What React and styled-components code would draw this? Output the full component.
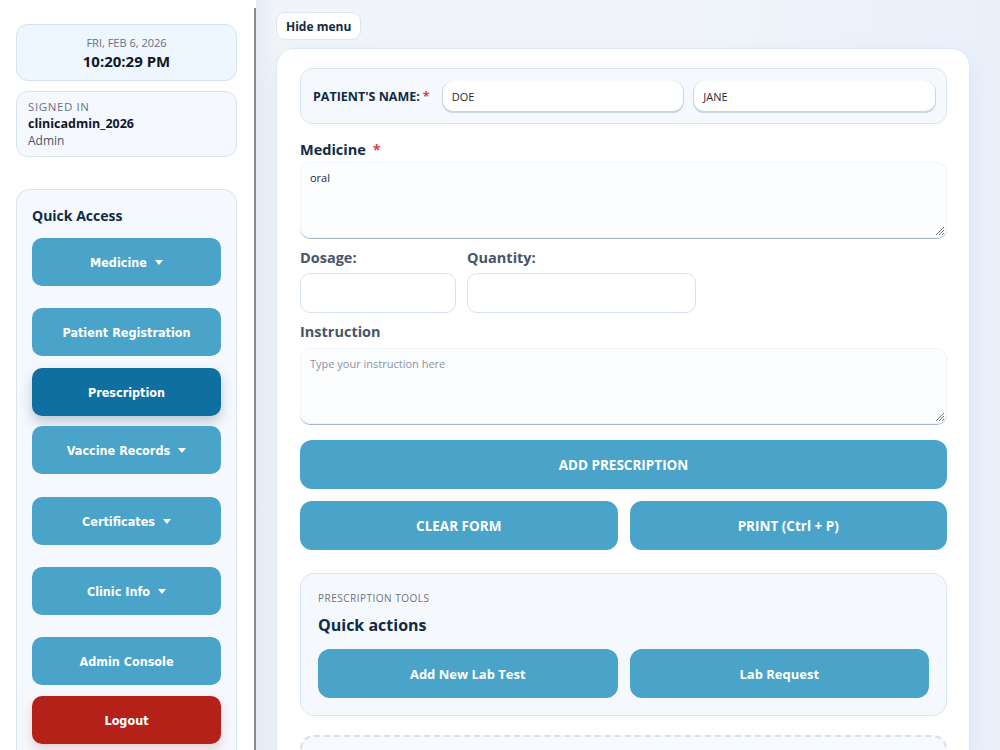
import { styled, createGlobalStyle } from "styled-components";

const GlobalStyle = createGlobalStyle`
    html, body {
        margin: 0;
        padding: 0;
        background: #ffffff;
        font-family: "Open Sans", "Noto Sans", sans-serif;
        color: #0f2a44;
    }
    * {
        box-sizing: border-box;
    }
`;

const Page = styled.div`
    display: flex;
    width: 1000px;
    height: 750px;
    overflow: hidden;
`;

const Sidebar = styled.aside`
    width: 254px;
    flex-shrink: 0;
    padding: 24px 17px 0 16px;
    display: flex;
    flex-direction: column;
    background: #ffffff;
`;

const Divider = styled.div`
    width: 2px;
    margin-top: 8px;
    background: #8c8c8c;
    flex-shrink: 0;
`;

const InfoBox = styled.div`
    border-radius: 12px;
    border: 1px solid #d5e3f0;
    background: ${(p) => p.$bg};
    padding: ${(p) => p.$pad};
    display: flex;
    flex-direction: column;
    align-items: ${(p) => (p.$center ? "center" : "flex-start")};
    margin-bottom: ${(p) => p.$mb || 0}px;
`;

const DateText = styled.div`
    font-size: 11px;
    color: #6b7280;
    line-height: 16px;
`;

const TimeText = styled.div`
    font-size: 15px;
    font-weight: 700;
    color: #111827;
    line-height: 20px;
`;

const SmallCaps = styled.div`
    font-size: 11.5px;
    letter-spacing: 0.6px;
    color: #6b7280;
    line-height: 16px;
`;

const UserName = styled.div`
    font-size: 12.5px;
    font-weight: 700;
    color: #111827;
    line-height: 18px;
`;

const Role = styled.div`
    font-size: 12px;
    color: #4b5563;
    line-height: 16px;
`;

const QuickPanel = styled.div`
    border: 1px solid #d8e5f1;
    border-bottom: none;
    border-radius: 14px 14px 0 0;
    background: #f5f9fd;
    padding: 16px 15px 20px 15px;
    display: flex;
    flex-direction: column;
    flex: 1;
`;

const PanelTitle = styled.div`
    font-size: 14px;
    font-weight: 700;
    color: #0f2a44;
    line-height: 20px;
    margin-bottom: 12px;
`;

const NavButton = styled.button`
    width: 189px;
    height: 48px;
    border: none;
    border-radius: 10px;
    background: ${(p) => (p.$variant === "active" ? "#0f6fa0" : p.$variant === "danger" ? "#b32119" : "#4aa3c9")};
    box-shadow: ${(p) =>
        p.$variant === "active"
            ? "0 6px 12px rgba(15, 60, 100, 0.25)"
            : p.$variant === "danger"
            ? "0 6px 12px rgba(180, 40, 30, 0.18)"
            : "none"};
    color: #ffffff;
    font-family: "DejaVu Sans", Verdana, sans-serif;
    font-stretch: condensed;
    font-size: 12.5px;
    font-weight: 700;
    display: flex;
    align-items: center;
    justify-content: center;
    gap: 8px;
    margin-bottom: ${(p) => p.$mb}px;
    flex-shrink: 0;
    cursor: pointer;
`;

const Caret = styled.span`
    width: 0;
    height: 0;
    border-left: 4px solid transparent;
    border-right: 4px solid transparent;
    border-top: 5px solid #ffffff;
`;

const Main = styled.main`
    flex: 1;
    min-width: 0;
    padding: 12px 29px 0 20px;
    background: linear-gradient(90deg, #e4ecf6 0px, #f1f5fa 20px, #f0f4fa 60%, #e9f0fa 100%);
    display: flex;
    flex-direction: column;
    align-items: flex-start;
    overflow: hidden;
`;

const HideButton = styled.button`
    height: 28px;
    flex-shrink: 0;
    padding: 0 9px;
    border: 1px solid #dbe6f2;
    border-radius: 9px;
    background: #ffffff;
    font-family: "Open Sans", sans-serif;
    font-size: 12px;
    font-weight: 700;
    color: #0f2a44;
    margin-bottom: 8px;
    cursor: pointer;
`;

const Card = styled.section`
    width: 694px;
    flex-shrink: 0;
    background: #ffffff;
    border: 1px solid #dde8f4;
    border-radius: 18px;
    box-shadow: 0 8px 24px rgba(30, 70, 120, 0.06);
    padding: 19px 22px 40px 23px;
    display: flex;
    flex-direction: column;
`;

const NameRow = styled.div`
    height: 56px;
    display: flex;
    align-items: center;
    gap: 11px;
    padding: 0 11px 0 12px;
    border: 1px solid #d9e6f2;
    border-radius: 12px;
    background: #f5f9fd;
    margin-bottom: 16px;
`;

const NameLabel = styled.div`
    font-size: 12.5px;
    font-weight: 700;
    color: #0f2a44;
    white-space: nowrap;
    margin-right: 2px;
`;

const Star = styled.span`
    color: #e0413a;
    margin-left: ${(p) => p.$gap || 3}px;
`;

const NameInput = styled.div`
    flex: 1;
    height: 30px;
    background: #ffffff;
    border-radius: 10px;
    box-shadow: 0 1px 0 1px #c9d6e3;
    font-size: 11px;
    color: #1f2937;
    display: flex;
    align-items: center;
    padding-left: 9px;
`;

const FieldLabel = styled.div`
    font-size: 14.5px;
    font-weight: 700;
    color: ${(p) => (p.$dark ? "#0f2a44" : "#475569")};
    line-height: 20px;
    margin-bottom: ${(p) => p.$mb || 4}px;
`;

const TextArea = styled.div`
    position: relative;
    height: 76px;
    flex-shrink: 0;
    background: #fcfdfe;
    border-radius: 10px;
    box-shadow: 0 1px 0 0 #a7b7c8, inset 0 0 0 1px #f1f5f9;
    font-size: 11px;
    color: ${(p) => (p.$placeholder ? "#8a94a3" : "#1f2937")};
    padding: 8px 10px;
    margin-bottom: ${(p) => p.$mb}px;
`;

const Grip = styled.svg`
    position: absolute;
    right: 2px;
    bottom: 2px;
`;

const SmallRow = styled.div`
    display: flex;
    gap: 11px;
    margin-bottom: 9px;
`;

const SmallField = styled.div`
    display: flex;
    flex-direction: column;
    width: ${(p) => p.$w}px;
`;

const SmallInput = styled.div`
    height: 40px;
    border: 1px solid #d6e2ee;
    border-radius: 10px;
    background: #ffffff;
`;

const ActionButton = styled.button`
    height: 49px;
    flex: 1;
    width: 100%;
    border: none;
    border-radius: 12px;
    background: #4aa3c9;
    color: #ffffff;
    font-family: "Open Sans", sans-serif;
    font-size: ${(p) => p.$size || 13.5}px;
    font-weight: 700;
    cursor: pointer;
`;

const ButtonRow = styled.div`
    display: flex;
    gap: 12px;
    margin-top: ${(p) => p.$mt}px;
    margin-bottom: ${(p) => p.$mb || 0}px;
`;

const ToolsBox = styled.div`
    border: 1px solid #d9e6f2;
    border-radius: 14px;
    background: #f5f9fd;
    padding: 17px;
    display: flex;
    flex-direction: column;
`;

const ToolsEyebrow = styled.div`
    font-size: 10px;
    letter-spacing: 0.5px;
    color: #6b7280;
    line-height: 14px;
    margin-bottom: 10px;
`;

const ToolsTitle = styled.div`
    font-size: 16px;
    font-weight: 700;
    color: #0f2a44;
    line-height: 20px;
    margin-bottom: 14px;
`;

const DashedBox = styled.div`
    margin-top: 19px;
    height: 60px;
    border: 2px dashed #d3e2f0;
    border-radius: 14px;
    background: #f7fafe;
`;

const GripIcon = () => (
    <Grip width="12" height="12" viewBox="0 0 12 12">
        <path d="M11 3 L3 11 M11 6 L6 11 M11 9 L9 11" stroke="#6b7280" strokeWidth="1" fill="none" />
    </Grip>
);

const navItems = [
    { label: "Medicine", caret: true, mb: 22 },
    { label: "Patient Registration", mb: 12 },
    { label: "Prescription", variant: "active", mb: 10 },
    { label: "Vaccine Records", caret: true, mb: 23 },
    { label: "Certificates", caret: true, mb: 22 },
    { label: "Clinic Info", caret: true, mb: 22 },
    { label: "Admin Console", mb: 11 },
    { label: "Logout", variant: "danger", mb: 0 },
];

const App = () => {
    return (
        <>
            <GlobalStyle />
            <Page>
                <Sidebar>
                    <InfoBox $bg="#eef6ff" $pad="10px 0 9px" $center $mb={10}>
                        <DateText>FRI, FEB 6, 2026</DateText>
                        <TimeText>10:20:29 PM</TimeText>
                    </InfoBox>
                    <InfoBox $bg="#f5f9ff" $pad="7px 11px 7px" $mb={32}>
                        <SmallCaps>SIGNED IN</SmallCaps>
                        <UserName>clinicadmin_2026</UserName>
                        <Role>Admin</Role>
                    </InfoBox>
                    <QuickPanel>
                        <PanelTitle>Quick Access</PanelTitle>
                        {navItems.map((item) => (
                            <NavButton key={item.label} $variant={item.variant} $mb={item.mb}>
                                {item.label}
                                {item.caret && <Caret />}
                            </NavButton>
                        ))}
                    </QuickPanel>
                </Sidebar>
                <Divider />
                <Main>
                    <HideButton>Hide menu</HideButton>
                    <Card>
                        <NameRow>
                            <NameLabel>
                                PATIENT'S NAME:<Star>*</Star>
                            </NameLabel>
                            <NameInput>DOE</NameInput>
                            <NameInput>JANE</NameInput>
                        </NameRow>

                        <FieldLabel $dark $mb={2}>
                            Medicine<Star $gap={7}>*</Star>
                        </FieldLabel>
                        <TextArea $mb={10}>
                            oral
                            <GripIcon />
                        </TextArea>

                        <SmallRow>
                            <SmallField $w={156}>
                                <FieldLabel $mb={5}>Dosage:</FieldLabel>
                                <SmallInput />
                            </SmallField>
                            <SmallField $w={229}>
                                <FieldLabel $mb={5}>Quantity:</FieldLabel>
                                <SmallInput />
                            </SmallField>
                        </SmallRow>

                        <FieldLabel $mb={6}>Instruction</FieldLabel>
                        <TextArea $placeholder $mb={0}>
                            Type your instruction here
                            <GripIcon />
                        </TextArea>

                        <ButtonRow $mt={16}>
                            <ActionButton>ADD PRESCRIPTION</ActionButton>
                        </ButtonRow>
                        <ButtonRow $mt={12} $mb={23}>
                            <ActionButton>CLEAR FORM</ActionButton>
                            <ActionButton>PRINT (Ctrl + P)</ActionButton>
                        </ButtonRow>

                        <ToolsBox>
                            <ToolsEyebrow>PRESCRIPTION TOOLS</ToolsEyebrow>
                            <ToolsTitle>Quick actions</ToolsTitle>
                            <ButtonRow $mt={0}>
                                <ActionButton $size={13}>Add New Lab Test</ActionButton>
                                <ActionButton $size={13}>Lab Request</ActionButton>
                            </ButtonRow>
                        </ToolsBox>

                        <DashedBox />
                    </Card>
                </Main>
            </Page>
        </>
    );
};

export default App;
